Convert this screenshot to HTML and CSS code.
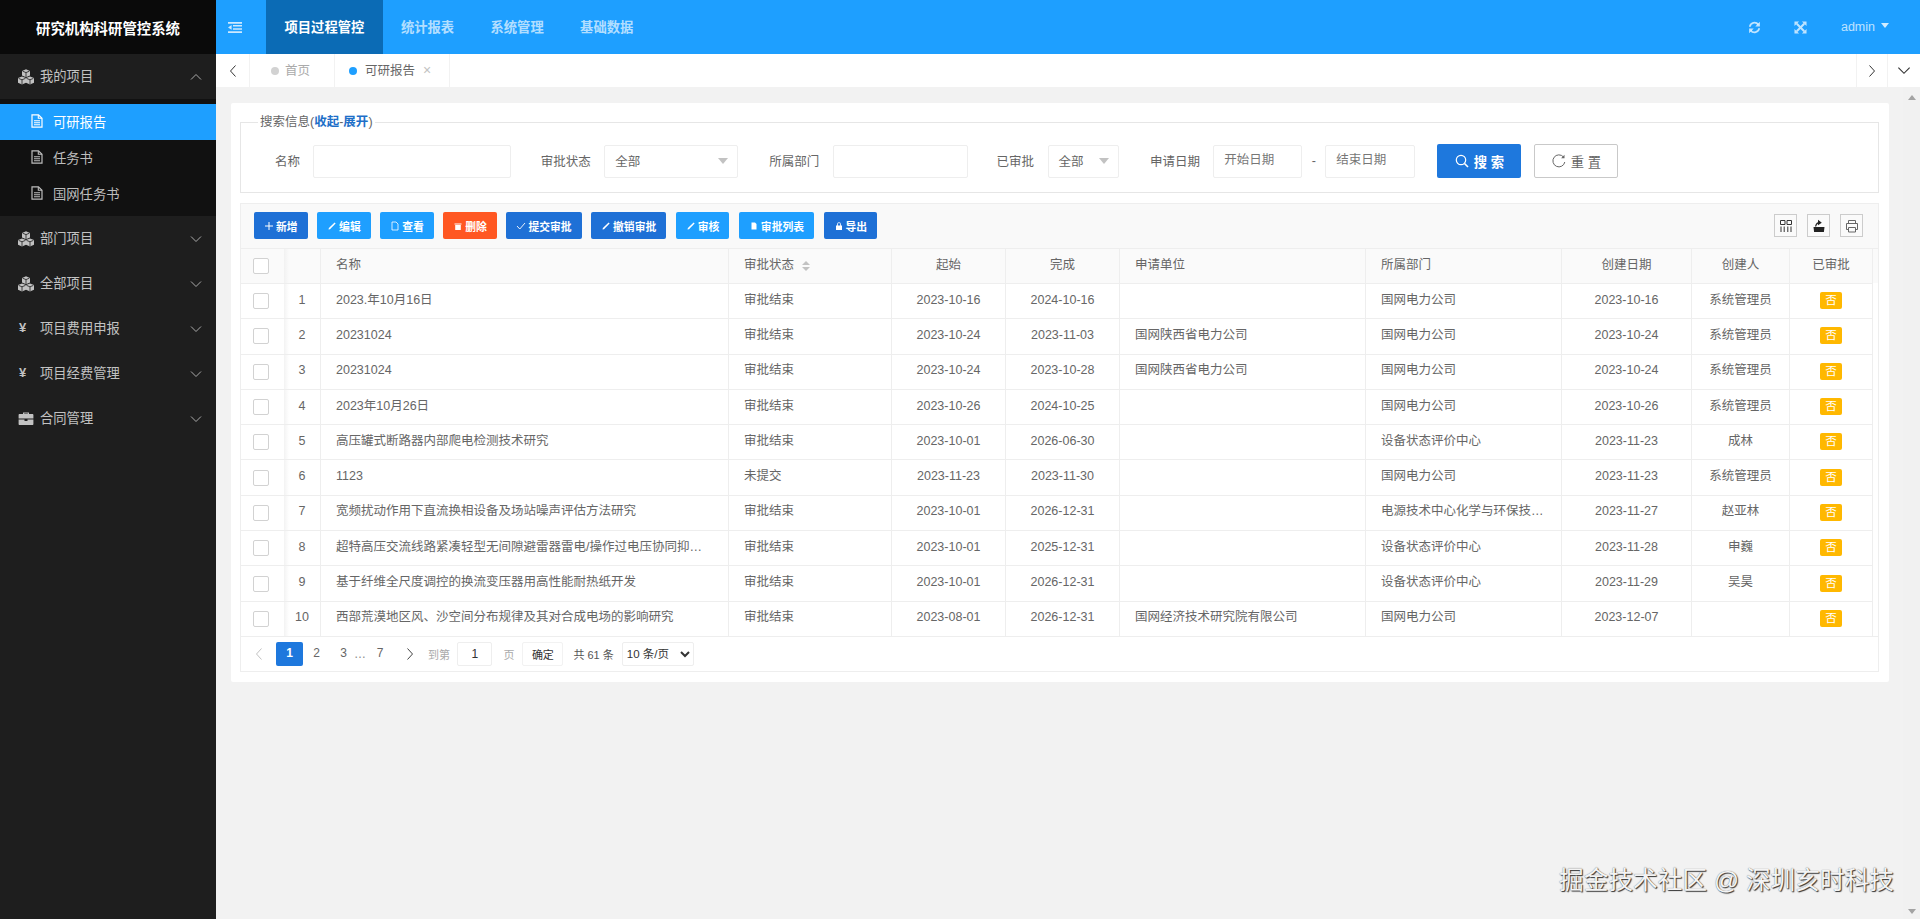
FILE: index.html
```html
<!DOCTYPE html>
<html lang="zh-CN">
<head>
<meta charset="utf-8">
<title>研究机构科研管控系统</title>
<link rel="stylesheet" href="styles.css">
</head>
<body>
<svg class="defs" width="0" height="0" aria-hidden="true">
  <symbol id="i-cubes" viewBox="0 0 16 16">
    <path fill="currentColor" d="M8 .2l4 1.700v4.600L8 8.200 4 6.500V1.900zM4 7.400l4 1.700v4.600l-4 1.700-4-1.700V9.100zM12 7.400l4 1.700v4.600l-4 1.700-4-1.700V9.100z"/>
    <path fill="none" stroke="#1e1e1e" stroke-width=".8" d="M4.600 2.200L8 3.600l3.400-1.400M8 3.600v4.600M.6 9.400L4 10.800l3.400-1.400M4 10.800v4.600M8.600 9.400L12 10.800l3.400-1.400M12 10.800v4.600M8 8.200v1"/>
  </symbol>
  <symbol id="i-case" viewBox="0 0 16 16">
    <path fill="currentColor" d="M5 3V1.600h6V3h3.400c.6 0 1 .4 1 1v3.600H.6V4c0-.6.4-1 1-1zm1.200 0h3.600v-.4H6.200zM.6 8.600h5.900v1.400h3V8.600h5.900V13c0 .6-.4 1-1 1H1.600c-.6 0-1-.4-1-1z"/>
  </symbol>
  <symbol id="i-doc" viewBox="0 0 12 14">
    <path fill="none" stroke="currentColor" stroke-width="1.2" d="M1 .8h6.500L11 4.200v9H1z"/>
    <path fill="none" stroke="currentColor" stroke-width="1.100" d="M7.300 1v3.300H11M3 6.800h6M3 8.800h6M3 10.800h6"/>
  </symbol>
  <symbol id="i-up" viewBox="0 0 12 8"><path fill="none" stroke="currentColor" d="M1 6.500L6 1.500l5 5"/></symbol>
  <symbol id="i-down" viewBox="0 0 12 8"><path fill="none" stroke="currentColor" d="M1 1.500l5 5 5-5"/></symbol>
  <symbol id="i-left" viewBox="0 0 8 14"><path fill="none" stroke="currentColor" stroke-width="1" d="M6.500 1.500L1.500 7l5 5.500"/></symbol>
  <symbol id="i-right" viewBox="0 0 8 14"><path fill="none" stroke="currentColor" stroke-width="1" d="M1.500 1.500l5 5.500-5 5.500"/></symbol>
  <symbol id="i-menu" viewBox="0 0 14 11">
    <path fill="currentColor" d="M0 0h14v1.700H0zM5 3h9v1.600H5zM5 6.200h9v1.600H5zM0 9.300h14V11H0zM3.600 3v4.800L0 5.400z"/>
  </symbol>
  <symbol id="i-sync" viewBox="0 0 14 14">
    <path fill="none" stroke="currentColor" stroke-width="2" d="M2 6.200A5 5 0 0 1 11 3.800M12 7.800A5 5 0 0 1 3 10.200"/>
    <path fill="currentColor" d="M12.800.8v5h-5zM1.200 13.200v-5h5z"/>
  </symbol>
  <symbol id="i-full" viewBox="0 0 14 14">
    <path fill="none" stroke="currentColor" stroke-width="2.200" d="M3 3l8 8M11 3l-8 8"/>
    <path fill="currentColor" d="M.5.500h5l-5 5zM13.500.500v5l-5-5zM.5 13.500v-5l5 5zM13.500 13.500h-5l5-5z"/>
  </symbol>
  <symbol id="i-search" viewBox="0 0 14 14">
    <circle cx="6" cy="6" r="4.700" fill="none" stroke="currentColor" stroke-width="1.200"/>
    <path fill="none" stroke="currentColor" stroke-width="1.600" d="M9.500 9.500l3.500 3.500"/>
  </symbol>
  <symbol id="i-reset" viewBox="0 0 14 14">
    <path fill="none" stroke="currentColor" d="M11.500 3A6 6 0 1 0 12.800 8"/>
    <path fill="currentColor" d="M12.500.8v3.400H9.100z"/>
  </symbol>
  <symbol id="i-plus" viewBox="0 0 10 10"><path fill="none" stroke="currentColor" d="M5 1v8M1 5h8"/></symbol>
  <symbol id="i-pen" viewBox="0 0 10 10"><path fill="currentColor" d="M7.600 1.500l1 1L3 8.200 1.500 8.600l.4-1.500z"/></symbol>
  <symbol id="i-page" viewBox="0 0 10 10"><path fill="none" stroke="currentColor" stroke-width=".8" d="M2 1h4l2 2v6H2z"/></symbol>
  <symbol id="i-trash" viewBox="0 0 10 10"><path fill="currentColor" d="M1.500 2.500h7v1h-7zM2.200 4h5.600v5H2.200z"/></symbol>
  <symbol id="i-check" viewBox="0 0 10 10"><path fill="none" stroke="currentColor" stroke-width=".9" d="M1 5l2.800 3L9 2"/></symbol>
  <symbol id="i-list" viewBox="0 0 10 10"><path fill="currentColor" d="M2.500 1.500h3.500l1.500 1.500v5.500h-5z"/></symbol>
  <symbol id="i-lock" viewBox="0 0 10 10"><path fill="currentColor" d="M2 4.500h6v4.500H2zM3.200 4.500V3a1.800 1.800 0 0 1 3.600 0v1.500H6V3a1 1 0 0 0-2 0v1.500z"/></symbol>
  <symbol id="i-cols" viewBox="0 0 14 14">
    <path fill="none" stroke="#333" d="M1.500 1.500h4.500v4H1.500zM8 1.500h4.500v4H8z"/>
    <path fill="none" stroke="#333" d="M2 7.500v5.500M5.200 7.500v5.500M8.800 7.500v5.500M12 7.500v5.500"/>
  </symbol>
  <symbol id="i-export" viewBox="0 0 14 14">
    <path fill="#222" d="M1.500 8h11l-.6 5H2.100zM3 7.400C3.400 5.300 4.400 3.800 6 3.300V.8l3.800 3L6 6.200V4.800c-.9.500-1.500 1.400-1.800 2.600z"/>
  </symbol>
  <symbol id="i-print" viewBox="0 0 14 14">
    <path fill="none" stroke="#666" d="M3.500 4.500v-3h7v3M3.500 10.500H1.500v-6h11v6h-2M3.500 8.500h7v4.500h-7z"/>
  </symbol>
</svg>

<div class="app">
  <aside class="side">
    <div class="logo">研究机构科研管控系统</div>
    <nav class="side-nav">
      <a class="group"><svg class="g-ico"><use href="#i-cubes"/></svg><span>我的项目</span><svg class="chev"><use href="#i-up"/></svg></a>
      <div class="sub">
        <a class="sub-item active"><svg class="s-ico"><use href="#i-doc"/></svg>可研报告</a>
        <a class="sub-item"><svg class="s-ico"><use href="#i-doc"/></svg>任务书</a>
        <a class="sub-item"><svg class="s-ico"><use href="#i-doc"/></svg>国网任务书</a>
      </div>
      <a class="group"><svg class="g-ico"><use href="#i-cubes"/></svg><span>部门项目</span><svg class="chev"><use href="#i-down"/></svg></a>
      <a class="group"><svg class="g-ico"><use href="#i-cubes"/></svg><span>全部项目</span><svg class="chev"><use href="#i-down"/></svg></a>
      <a class="group"><b class="g-yen">¥</b><span>项目费用申报</span><svg class="chev"><use href="#i-down"/></svg></a>
      <a class="group"><b class="g-yen">¥</b><span>项目经费管理</span><svg class="chev"><use href="#i-down"/></svg></a>
      <a class="group"><svg class="g-ico"><use href="#i-case"/></svg><span>合同管理</span><svg class="chev"><use href="#i-down"/></svg></a>
    </nav>
  </aside>

  <div class="main">
    <header class="top">
      <a class="menu-btn"><svg class="menu-ico"><use href="#i-menu"/></svg></a>
      <a class="top-item on">项目过程管控</a>
      <a class="top-item">统计报表</a>
      <a class="top-item">系统管理</a>
      <a class="top-item">基础数据</a>
      <div class="top-right">
        <svg class="top-ico"><use href="#i-sync"/></svg>
        <svg class="top-ico"><use href="#i-full"/></svg>
        <span class="user">admin<i class="caret"></i></span>
      </div>
    </header>

    <div class="tabs">
      <a class="tab-ctl"><svg class="ctl-h"><use href="#i-left"/></svg></a>
      <a class="tab tab-home"><i class="dot"></i>首页</a>
      <a class="tab tab-cur"><i class="dot dot-on"></i>可研报告<span class="tab-x">×</span></a>
      <a class="tab-ctl tab-ctl-r"><svg class="ctl-h"><use href="#i-right"/></svg></a>
      <a class="tab-ctl tab-ctl-last"><svg class="ctl-d"><use href="#i-down"/></svg></a>
    </div>

    <div class="body-wrap">
      <main class="content">
        <section class="card">
          <fieldset class="search">
            <legend>搜索信息(<a class="lg-link">收起</a>-<a class="lg-link">展开</a>)</legend>
            <div class="search-row">
              <label class="lbl">名称</label><input class="ipt w-name" type="text">
              <label class="lbl">审批状态</label><div class="sel w-state">全部<i class="sel-caret"></i></div>
              <label class="lbl">所属部门</label><input class="ipt w-dept" type="text">
              <label class="lbl">已审批</label><div class="sel w-appr">全部<i class="sel-caret"></i></div>
              <label class="lbl">申请日期</label><input class="ipt w-date" type="text" placeholder="开始日期">
              <span class="dash">-</span><input class="ipt w-date2" type="text" placeholder="结束日期">
              <button class="act act-search"><svg class="act-ico"><use href="#i-search"/></svg>搜 索</button>
              <button class="act act-reset"><svg class="act-ico"><use href="#i-reset"/></svg>重 置</button>
            </div>
          </fieldset>

          <div class="grid-box">
            <div class="toolbar">
              <button class="btn b-blue"><svg class="b-ico"><use href="#i-plus"/></svg>新增</button>
              <button class="btn b-sky"><svg class="b-ico"><use href="#i-pen"/></svg>编辑</button>
              <button class="btn b-sky"><svg class="b-ico"><use href="#i-page"/></svg>查看</button>
              <button class="btn b-red"><svg class="b-ico"><use href="#i-trash"/></svg>删除</button>
              <button class="btn b-blue"><svg class="b-ico"><use href="#i-check"/></svg>提交审批</button>
              <button class="btn b-blue"><svg class="b-ico"><use href="#i-pen"/></svg>撤销审批</button>
              <button class="btn b-sky"><svg class="b-ico"><use href="#i-pen"/></svg>审核</button>
              <button class="btn b-sky"><svg class="b-ico"><use href="#i-list"/></svg>审批列表</button>
              <button class="btn b-blue"><svg class="b-ico"><use href="#i-lock"/></svg>导出</button>
              <div class="tool-right">
                <button class="tool"><svg class="tool-ico"><use href="#i-cols"/></svg></button>
                <button class="tool"><svg class="tool-ico"><use href="#i-export"/></svg></button>
                <button class="tool"><svg class="tool-ico"><use href="#i-print"/></svg></button>
              </div>
            </div>

            <table class="tbl">
              <colgroup>
                <col class="c-chk"><col class="c-no"><col class="c-name"><col class="c-state"><col class="c-date"><col class="c-date"><col class="c-org"><col class="c-dept"><col class="c-cdate"><col class="c-user"><col class="c-appr"><col class="c-gut">
              </colgroup>
              <thead>
                <tr>
                  <th class="chk"><i class="box"></i></th>
                  <th class="no"></th>
                  <th class="l">名称</th>
                  <th class="l">审批状态<i class="sort"></i></th>
                  <th>起始</th><th>完成</th>
                  <th class="l">申请单位</th>
                  <th class="l">所属部门</th>
                  <th>创建日期</th><th>创建人</th><th>已审批</th>
                  <th class="gut"></th>
                </tr>
              </thead>
              <tbody>
                <tr><td class="chk"><i class="box"></i></td><td class="no">1</td><td class="l">2023.年10月16日</td><td class="l">审批结束</td><td>2023-10-16</td><td>2024-10-16</td><td class="l"></td><td class="l">国网电力公司</td><td>2023-10-16</td><td>系统管理员</td><td><span class="badge">否</span></td><td class="gut"></td></tr>
                <tr><td class="chk"><i class="box"></i></td><td class="no">2</td><td class="l">20231024</td><td class="l">审批结束</td><td>2023-10-24</td><td>2023-11-03</td><td class="l">国网陕西省电力公司</td><td class="l">国网电力公司</td><td>2023-10-24</td><td>系统管理员</td><td><span class="badge">否</span></td><td class="gut"></td></tr>
                <tr><td class="chk"><i class="box"></i></td><td class="no">3</td><td class="l">20231024</td><td class="l">审批结束</td><td>2023-10-24</td><td>2023-10-28</td><td class="l">国网陕西省电力公司</td><td class="l">国网电力公司</td><td>2023-10-24</td><td>系统管理员</td><td><span class="badge">否</span></td><td class="gut"></td></tr>
                <tr><td class="chk"><i class="box"></i></td><td class="no">4</td><td class="l">2023年10月26日</td><td class="l">审批结束</td><td>2023-10-26</td><td>2024-10-25</td><td class="l"></td><td class="l">国网电力公司</td><td>2023-10-26</td><td>系统管理员</td><td><span class="badge">否</span></td><td class="gut"></td></tr>
                <tr><td class="chk"><i class="box"></i></td><td class="no">5</td><td class="l">高压罐式断路器内部爬电检测技术研究</td><td class="l">审批结束</td><td>2023-10-01</td><td>2026-06-30</td><td class="l"></td><td class="l">设备状态评价中心</td><td>2023-11-23</td><td>成林</td><td><span class="badge">否</span></td><td class="gut"></td></tr>
                <tr><td class="chk"><i class="box"></i></td><td class="no">6</td><td class="l">1123</td><td class="l">未提交</td><td>2023-11-23</td><td>2023-11-30</td><td class="l"></td><td class="l">国网电力公司</td><td>2023-11-23</td><td>系统管理员</td><td><span class="badge">否</span></td><td class="gut"></td></tr>
                <tr><td class="chk"><i class="box"></i></td><td class="no">7</td><td class="l">宽频扰动作用下直流换相设备及场站噪声评估方法研究</td><td class="l">审批结束</td><td>2023-10-01</td><td>2026-12-31</td><td class="l"></td><td class="l">电源技术中心化学与环保技…</td><td>2023-11-27</td><td>赵亚林</td><td><span class="badge">否</span></td><td class="gut"></td></tr>
                <tr><td class="chk"><i class="box"></i></td><td class="no">8</td><td class="l">超特高压交流线路紧凑轻型无间隙避雷器雷电/操作过电压协同抑…</td><td class="l">审批结束</td><td>2023-10-01</td><td>2025-12-31</td><td class="l"></td><td class="l">设备状态评价中心</td><td>2023-11-28</td><td>申巍</td><td><span class="badge">否</span></td><td class="gut"></td></tr>
                <tr><td class="chk"><i class="box"></i></td><td class="no">9</td><td class="l">基于纤维全尺度调控的换流变压器用高性能耐热纸开发</td><td class="l">审批结束</td><td>2023-10-01</td><td>2026-12-31</td><td class="l"></td><td class="l">设备状态评价中心</td><td>2023-11-29</td><td>吴昊</td><td><span class="badge">否</span></td><td class="gut"></td></tr>
                <tr><td class="chk"><i class="box"></i></td><td class="no">10</td><td class="l">西部荒漠地区风、沙空间分布规律及其对合成电场的影响研究</td><td class="l">审批结束</td><td>2023-08-01</td><td>2026-12-31</td><td class="l">国网经济技术研究院有限公司</td><td class="l">国网电力公司</td><td>2023-12-07</td><td></td><td><span class="badge">否</span></td><td class="gut"></td></tr>
              </tbody>
            </table>

            <div class="pager">
              <svg class="pg-arrow pg-off"><use href="#i-left"/></svg>
              <a class="pg pg-on">1</a>
              <a class="pg">2</a>
              <a class="pg pg-3">3</a>
              <span class="pg-dots">…</span>
              <a class="pg pg-7">7</a>
              <svg class="pg-arrow pg-next"><use href="#i-right"/></svg>
              <span class="pg-txt pg-to">到第</span>
              <input class="pg-ipt" type="text" value="1">
              <span class="pg-txt pg-unit">页</span>
              <button class="pg-go">确定</button>
              <span class="pg-total">共 61 条</span>
              <select class="pg-size"><option>10 条/页</option></select>
            </div>
          </div>
        </section>
      </main>
      <div class="rail"><i class="rail-up"></i><i class="rail-down"></i></div>
    </div>
  </div>
</div>
<div class="watermark">掘金技术社区 @ 深圳亥时科技</div>
</body>
</html>
```

FILE: styles.css
```css
* { box-sizing: border-box; }
html, body { margin: 0; height: 100%; overflow: hidden; }
body {
  font-family: "Liberation Sans", "Noto Sans CJK SC", sans-serif;
  font-size: 12.5px;
  color: #666;
  background: #f2f2f2;
}
a { text-decoration: none; color: inherit; }
i { font-style: normal; }
.defs { position: absolute; }

.app { display: flex; height: 919px; }

/* sidebar */
.side { width: 216px; flex: none; background: #1e1e1e; display: flex; flex-direction: column; }
.logo {
  height: 54px; background: #0a0a0a; color: #fff;
  font-size: 14.4px; font-weight: 700;
  display: flex; align-items: center; justify-content: center;
}
.group {
  height: 45px; display: flex; align-items: center;
  padding-left: 18px; padding-right: 14px;
  color: #c2c2c2; font-size: 13.3px;
}
.group span { flex: 1; padding-bottom: 2px; }
.g-ico { width: 16px; height: 16px; margin-right: 6px; flex: none; }
.g-yen { width: 16px; margin-right: 6px; padding-left: 1px; padding-bottom: 3px; font-size: 13px; flex: none; }
.chev { width: 12px; height: 8px; flex: none; color: #aaa; }
.sub { background: #111; padding: 5px 0 4px; }
.sub-item {
  height: 36px; display: flex; align-items: center;
  padding: 0 0 2px 31px; color: #bdbdbd; font-size: 13.3px;
}
.sub-item.active { background: #1e9fff; color: #fff; }
.s-ico { width: 12px; height: 14px; margin-right: 10px; flex: none; }

/* main */
.main { flex: 1; min-width: 0; display: flex; flex-direction: column; }
.top { height: 54px; background: #1e9fff; display: flex; align-items: stretch; flex: none; }
.menu-btn { width: 50px; display: flex; align-items: center; padding-left: 12px; color: #cde9ff; }
.menu-ico { width: 14px; height: 11px; }
.top-item {
  padding: 0 18.2px 2px; display: flex; align-items: center;
  font-size: 13.3px; font-weight: 700; color: rgba(255,255,255,.68);
}
.top-item.on { background: #0b6bb5; color: #fff; padding: 0 18.5px 2px; }
.top-right { margin-left: auto; display: flex; align-items: center; padding-right: 31px; color: rgba(255,255,255,.72); }
.top-ico { width: 13px; height: 13px; margin-right: 33px; }
.user { font-size: 12.5px; margin-left: 1px; display: flex; align-items: center; }
.caret { width: 0; height: 0; margin-left: 6px; margin-top: -3px; border: 4.5px solid transparent; border-top: 5px solid rgba(255,255,255,.8); border-bottom: 0; }

/* tabs */
.tabs { height: 33px; background: #fff; display: flex; flex: none; align-items: stretch; color: #666; }
.tab-ctl { width: 34px; display: flex; align-items: center; justify-content: center; border-right: 1px solid #f2f2f2; color: #333; }
.tab-ctl-r { margin-left: auto; width: 32px; border-left: 1px solid #f2f2f2; }
.tab-ctl-last { width: 32px; border-right: 0; }
.ctl-h { width: 8px; height: 14px; }
.ctl-d { width: 14px; height: 9px; }
.tab { display: flex; align-items: center; border-right: 1px solid #f2f2f2; padding-bottom: 2px; }
.tab-home { width: 85px; padding-left: 21px; color: #aaa; }
.tab-cur { width: 115px; padding-left: 14px; }
.dot { width: 8px; height: 8px; border-radius: 50%; background: #d2d2d2; margin-right: 6px; margin-top: 2px; }
.dot-on { background: #1e9fff; margin-right: 8px; }
.tab-x { margin-left: 8px; color: #c2c2c2; font-size: 14px; }

/* content */
.body-wrap { flex: 1; min-height: 0; display: flex; }
.content { flex: 1; min-width: 0; padding: 16px 14px 0 15px; }
.card { background: #fff; padding: 11px 10px 10px 9px; border-radius: 2px; }
.rail { width: 17px; flex: none; background: #f1f1f1; display: flex; flex-direction: column; justify-content: space-between; align-items: center; padding: 8px 0 5px; }
.rail-up { border: 4px solid transparent; border-bottom: 5px solid #a3a3a3; border-top: 0; }
.rail-down { border: 4px solid transparent; border-top: 5px solid #a3a3a3; border-bottom: 0; }

/* search */
.search { margin: 0; padding: 14px 0 14px 0; border: 1px solid #e6e6e6; min-width: 0; }
.search legend { margin-left: 17px; padding: 0 2px; line-height: 16px; font-size: 12.5px; color: #666; }
.lg-link { color: #1e6fc8; font-weight: 700; }
.search-row { display: flex; align-items: center; padding-left: 34px; }
.lbl { margin-right: 13.4px; white-space: nowrap; padding-bottom: 2px; }
.ipt, .sel {
  height: 33px; border: 1px solid #eee; background: #fff; border-radius: 2px;
  font: inherit; color: #666; padding: 0 10px 2px; outline: 0; flex: none;
}
.ipt::placeholder { color: #777; opacity: 1; }
.sel { display: flex; align-items: center; justify-content: space-between; padding-right: 9px; }
.sel-caret { border: 5px solid transparent; border-top: 6px solid #c2c2c2; border-bottom: 0; margin-top: 2px; }
.w-name { width: 197.4px; margin-right: 30px; }
.w-state { width: 134px; margin-right: 31px; }
.w-dept { width: 135px; margin-right: 29px; }
.w-appr { width: 71px; margin-right: 31.4px; }
.w-date { width: 89px; }
.w-date2 { width: 90px; }
.dash { width: 23px; text-align: center; }
.act {
  height: 34px; width: 84px; border-radius: 2px; font: inherit; font-size: 13.3px;
  display: flex; align-items: center; justify-content: center; padding: 0; cursor: pointer;
}
.act-ico { width: 14px; height: 14px; margin-right: 5px; }
.act-search { background: #1e78dd; border: 0; color: #fff; margin-left: 22px; font-weight: 700; }
.act-reset { background: #fff; border: 1px solid #c9c9c9; color: #666; margin-left: 13px; }

/* grid */
.grid-box { margin-top: 10px; border: 1px solid #eee; }
.toolbar { height: 44px; background: #f9f9f9; display: flex; align-items: flex-start; gap: 9.5px; padding: 8px 15px 0 13px; }
.btn {
  height: 27px; padding: 0 10px; border: 0; border-radius: 2px; color: #fff;
  font: inherit; font-size: 10.8px; font-weight: 700;
  display: flex; align-items: center; white-space: nowrap; cursor: pointer;
}
.b-ico { width: 10px; height: 10px; margin-right: 2px; flex: none; }
.b-blue { background: #1e70d6; }
.b-sky { background: #1e9fff; }
.b-red { background: #ff5722; }
.tool-right { margin-left: auto; display: flex; gap: 10px; padding-top: 2px; }
.tool { width: 23px; height: 23px; border: 1px solid #ccc; background: #fafafa; padding: 0; display: flex; align-items: center; justify-content: center; }
.tool-ico { width: 14px; height: 14px; }

.tbl { width: 1637px; border-collapse: separate; border-spacing: 0; table-layout: fixed; }
.c-chk { width: 43px; } .c-no { width: 37px; } .c-name { width: 408px; } .c-state { width: 163px; }
.c-date { width: 114px; } .c-org { width: 246px; } .c-dept { width: 196px; } .c-cdate { width: 130px; }
.c-user { width: 98px; } .c-appr { width: 83px; } .c-gut { width: 5px; }
.tbl th, .tbl td {
  height: 35.3px; padding: 0 15px 3px; text-align: center; font-weight: 400; color: #666;
  line-height: 16px; border-top: 1px solid #eee; border-right: 1px solid #eee;
  white-space: nowrap;
}
.tbl th { height: 35px; background: #fafafa; }
.tbl .l { text-align: left; }
.tbl .chk { padding: 0 0 0 12px; text-align: left; border-right: 0; }
.tbl .no {
  padding: 0 0 3px;
  background: linear-gradient(90deg, #f3f3f3, #fff 5px);
}
.tbl th.no { background: linear-gradient(90deg, #f1f1f1, #fafafa 5px); }
.tbl .gut { padding: 0; border-right: 0; }
.tbl td.gut { border-top: 0; }
.box { display: block; width: 16px; height: 16px; border: 1px solid #d2d2d2; border-radius: 2px; background: #fff; }
.sort { display: inline-flex; flex-direction: column; justify-content: space-between; margin: 2px 0 0 8px; vertical-align: middle; height: 10px; }
.sort::before { content: ""; border: 4px solid transparent; border-bottom: 4px solid #c2c2c2; border-top: 0; }
.sort::after { content: ""; border: 4px solid transparent; border-top: 4px solid #c2c2c2; border-bottom: 0; }
.badge { display: inline-block; width: 22px; height: 17px; line-height: 17px; background: #ffb800; color: #fff; border-radius: 2px; font-size: 11.5px; vertical-align: middle; margin-top: 2px; }

/* pager */
.pager { height: 35px; border-top: 1px solid #eee; display: flex; align-items: center; font-size: 12px; color: #666; }
.pg-arrow { width: 8px; height: 14px; flex: none; }
.pg-off { margin-left: 14px; color: #c2c2c2; }
.pg-next { margin-left: 12.4px; color: #444; }
.pg { width: 27px; height: 24px; line-height: 23px; text-align: center; }
.pg-on { background: #1e78dd; color: #fff; border-radius: 2px; margin-left: 13px; font-weight: 700; }
.pg-dots { width: 10px; text-align: center; color: #888; margin-left: -3px; }
.pg-7 { margin-left: 2.6px; }
.pg-txt { color: #aaa; font-size: 11px; }
.pg-to { margin-left: 14px; }
.pg-ipt { width: 35px; height: 24px; margin-left: 7.4px; border: 1px solid #eee; border-radius: 2px; text-align: center; font: inherit; color: #333; padding: 0; outline: 0; }
.pg-unit { margin-left: 11px; }
.pg-go { width: 41px; height: 24px; margin-left: 8px; border: 1px solid #f2f2f2; background: #fff; border-radius: 2px; font: inherit; font-size: 11px; color: #333; padding: 0; }
.pg-total { margin-left: 10px; color: #555; font-size: 11px; }
.pg-size { width: 72px; height: 24px; margin-left: 8px; border: 1px solid #eee; border-radius: 2px; background: #fff; font: inherit; font-size: 11.5px; color: #333; outline: 0; }

/* overlay watermark */
.watermark {
  position: absolute; left: 1559px; top: 867px; white-space: nowrap;
  font-size: 24.7px; line-height: 28px; color: #f4f4f4;
  text-shadow: 1px 1px 1px #333, 0 0 1px #666;
}
```
